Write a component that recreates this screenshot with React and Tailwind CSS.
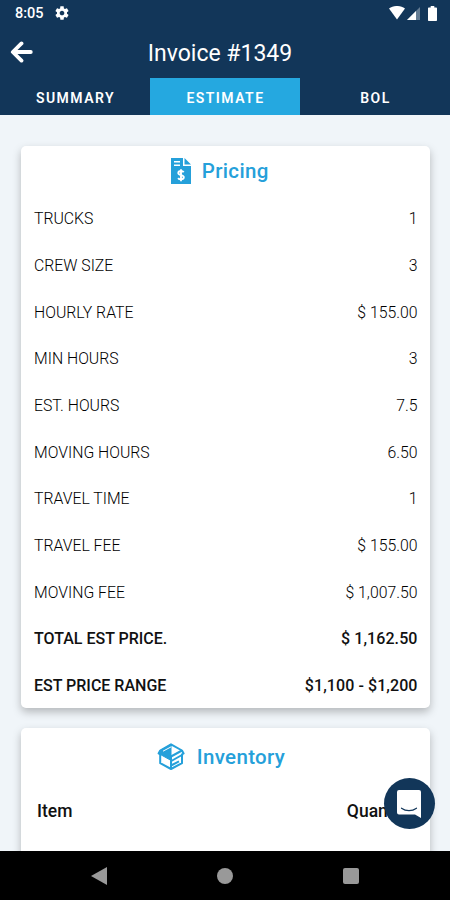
const tabs = ["SUMMARY", "ESTIMATE", "BOL"];

const pricing = [
  { label: "TRUCKS", value: "1" },
  { label: "CREW SIZE", value: "3" },
  { label: "HOURLY RATE", value: "$ 155.00" },
  { label: "MIN HOURS", value: "3" },
  { label: "EST. HOURS", value: "7.5" },
  { label: "MOVING HOURS", value: "6.50" },
  { label: "TRAVEL TIME", value: "1" },
  { label: "TRAVEL FEE", value: "$ 155.00" },
  { label: "MOVING FEE", value: "$ 1,007.50" },
  { label: "TOTAL EST PRICE.", value: "$ 1,162.50", bold: true },
  { label: "EST PRICE RANGE", value: "$1,100 - $1,200", bold: true }
];

function StatusBar() {
  return (
    <div className="flex h-[26px] items-center pl-[15px] pr-[13.5px]">
      <span className="pt-[2px] text-[14.5px] font-medium leading-none">8:05</span>
      <svg className="ml-[10.5px] h-4 w-4" viewBox="0 0 24 24" fill="currentColor">
        <path d="M19.43 12.98c.04-.32.07-.64.07-.98s-.03-.66-.07-.98l2.11-1.65c.19-.15.24-.42.12-.64l-2-3.46c-.12-.22-.39-.3-.61-.22l-2.49 1c-.52-.4-1.08-.73-1.69-.98l-.38-2.65C14.46 2.18 14.25 2 14 2h-4c-.25 0-.46.18-.49.42l-.38 2.65c-.61.25-1.17.59-1.69.98l-2.49-1c-.23-.09-.49 0-.61.22l-2 3.46c-.13.22-.07.49.12.64l2.11 1.65c-.04.32-.07.65-.07.98s.03.66.07.98l-2.11 1.65c-.19.15-.24.42-.12.64l2 3.46c.12.22.39.3.61.22l2.49-1c.52.4 1.08.73 1.69.98l.38 2.65c.03.24.24.42.49.42h4c.25 0 .46-.18.49-.42l.38-2.65c.61-.25 1.17-.59 1.69-.98l2.49 1c.23.09.49 0 .61-.22l2-3.46c.12-.22.07-.49-.12-.64l-2.11-1.65zM12 15.5c-1.93 0-3.5-1.57-3.5-3.5s1.57-3.5 3.5-3.5 3.5 1.57 3.5 3.5-1.57 3.5-3.5 3.5z" />
      </svg>
      <svg className="ml-auto h-[14px] w-4" viewBox="0 0 16 14" fill="currentColor">
        <path d="M0 2.6C4.6-.9 11.4-.9 16 2.6L8 13.5z" />
      </svg>
      <svg className="ml-[2px] h-[13px] w-[13px]" viewBox="0 0 13 13" fill="currentColor">
        <path d="M13 0v13H0z" opacity=".35" />
        <path d="M9 4v9H0z" />
      </svg>
      <svg className="ml-[8px] h-[15px] w-[9px]" viewBox="0 0 9 15" fill="currentColor">
        <path d="M2.7 0h3.6v1.5H8c.6 0 1 .4 1 1V14c0 .6-.4 1-1 1H1c-.6 0-1-.4-1-1V2.5c0-.6.4-1 1-1h1.7z" />
      </svg>
    </div>
  );
}

function Header() {
  return (
    <header className="h-[115px] shrink-0 bg-[#123659] text-white">
      <StatusBar />
      <div className="grid h-[52px] grid-cols-[40px_1fr_50px] items-center">
        <svg
          className="ml-[10px] h-[22px] w-6"
          viewBox="0 0 24 22"
          fill="none"
          stroke="currentColor"
          strokeWidth="3.8"
          strokeLinecap="round"
          strokeLinejoin="round"
        >
          <path d="M11.5 2.4 2.8 11l8.7 8.6M3.5 11h17.3" />
        </svg>
        <h1 className="pt-[3px] text-center text-[23px] leading-none">Invoice #1349</h1>
      </div>
      <nav className="grid h-[37px] grid-cols-3">
        {tabs.map((tab) => (
          <button
            key={tab}
            className={`pl-[1px] pt-[3px] text-[14px] font-semibold tracking-[1.45px] ${
              tab === "ESTIMATE" ? "bg-[#25a8e0]" : ""
            }`}
          >
            {tab}
          </button>
        ))}
      </nav>
    </header>
  );
}

function InvoiceIcon() {
  return (
    <svg className="h-[26px] w-5" viewBox="0 0 20 26">
      <path d="M0 0h12v8h8v18H0z" fill="currentColor" />
      <path d="M13.5 0 20 6.5h-6.5z" fill="currentColor" />
      <path d="M3 3.7h6M3 7.2h6" stroke="#fff" strokeWidth="1.5" />
      <path
        d="M12.7 14.2c-.6-.9-1.6-1.2-2.7-1.2-1.5 0-2.7.8-2.7 2s1 1.700 2.700 2.100 2.800.9 2.800 2.200-1.200 2.100-2.800 2.100c-1.300 0-2.300-.4-2.900-1.300M10 11.200v12"
        fill="none"
        stroke="#fff"
        strokeWidth="1.9"
      />
    </svg>
  );
}

function BoxIcon() {
  return (
    <svg
      className="h-[27px] w-7"
      viewBox="0 0 28 27"
      fill="none"
      stroke="currentColor"
      strokeWidth="2"
      strokeLinejoin="round"
    >
      <path d="M14 1.300 25 7.500l1.600 3-1.600.9v8.800L14 26 3.200 20.200v-8.800l-1.600-.9 1.600-3z" />
      <path d="M14 1.300 3.200 7.500l-1.600 3L13.300 17l.7-3.500z" fill="currentColor" strokeWidth="1" />
      <path d="M14 13.500 25 7.500M14 13.500V26M14.300 18l11.500-6.500M15 22l7-3.600" />
      <path d="M6 8.200 14 3.900" stroke="#fff" strokeWidth="1" />
    </svg>
  );
}

function Card({ icon, title, className, headingClass, children }) {
  return (
    <section
      className={`shrink-0 rounded-[5px] bg-white shadow-[0_4px_9px_rgba(0,0,0,0.25)] ${className}`}
    >
      <h2
        className={`flex items-center justify-center text-[20.5px] font-medium tracking-[0.35px] text-[#25a0da] ${headingClass}`}
      >
        {icon}
        {title}
      </h2>
      {children}
    </section>
  );
}

function PriceRow({ label, value, bold }) {
  return (
    <div
      className={`flex h-[46.67px] items-center justify-between pl-[13px] pr-[12.5px] ${
        bold ? "text-[16px] font-medium text-[#111]" : "text-[15.8px] font-light text-black"
      }`}
    >
      <span>{label}</span>
      <span className={bold ? "tracking-[0.08px]" : ""}>{value}</span>
    </div>
  );
}

function ChatButton() {
  return (
    <button className="absolute right-[15.5px] top-[778px] flex h-[51px] w-[51px] items-center justify-center rounded-full bg-[#123659]">
      <svg className="h-7 w-6" viewBox="0 0 24 28">
        <path d="M2 0h20a2 2 0 0 1 2 2v26l-6-3.5H2a2 2 0 0 1-2-2V2a2 2 0 0 1 2-2z" fill="#fff" />
        <path d="M4.5 18.2c4.500 3.300 10.500 3.300 15 0" fill="none" stroke="#123659" strokeWidth="1.2" strokeLinecap="round" />
      </svg>
    </button>
  );
}

export default function App() {
  return (
    <div className="relative flex h-[900px] w-[450px] flex-col overflow-hidden bg-[#f0f5f9] font-['Roboto',sans-serif]">
      <Header />
      <main className="flex min-h-0 flex-1 flex-col gap-5 overflow-hidden pl-[21px] pr-5 pt-[31px]">
        <Card
          icon={<InvoiceIcon />}
          title={<span className="ml-[10.5px] pt-[2px]">Pricing</span>}
          className="h-[562px]"
          headingClass="h-[50px] pb-[1px] pr-[11px]"
        >
          {pricing.map((row) => (
            <PriceRow key={row.label} {...row} />
          ))}
        </Card>
        <Card
          icon={<BoxIcon />}
          title={<span className="ml-3 pt-[2px]">Inventory</span>}
          className="h-[200px]"
          headingClass="h-[56px] pr-[9px]"
        >
          <div className="flex h-[54px] items-center justify-between pl-4 pr-[17.5px] text-[17.5px] font-medium text-[#111]">
            <span>Item</span>
            <span>Quantity</span>
          </div>
        </Card>
      </main>
      <footer className="flex h-[49px] shrink-0 items-center justify-between bg-black pl-[91px] pr-[91px] text-[#999]">
        <svg className="h-[18px] w-4" viewBox="0 0 16 18" fill="currentColor">
          <path d="M16 0v18L0 9z" />
        </svg>
        <span className="h-4 w-4 rounded-full bg-[#999]" />
        <span className="h-4 w-4 rounded-[2px] bg-[#999]" />
      </footer>
      <ChatButton />
    </div>
  );
}
